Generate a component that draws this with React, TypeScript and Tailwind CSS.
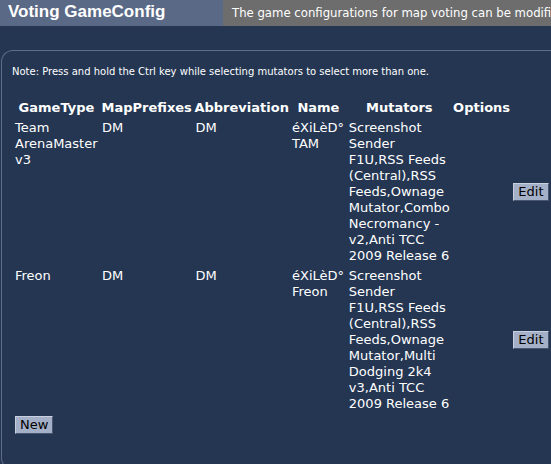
const rows = [
  {
    type: ["Team", "ArenaMaster", "v3"],
    prefix: "DM",
    abbr: "DM",
    name: ["éXiLèD°", "TAM"],
    mutators: [
      "Screenshot",
      "Sender",
      "F1U,RSS Feeds",
      "(Central),RSS",
      "Feeds,Ownage",
      "Mutator,Combo",
      "Necromancy -",
      "v2,Anti TCC",
      "2009 Release 6",
    ],
  },
  {
    type: ["Freon"],
    prefix: "DM",
    abbr: "DM",
    name: ["éXiLèD°", "Freon"],
    mutators: [
      "Screenshot",
      "Sender",
      "F1U,RSS Feeds",
      "(Central),RSS",
      "Feeds,Ownage",
      "Mutator,Multi",
      "Dodging 2k4",
      "v3,Anti TCC",
      "2009 Release 6",
    ],
  },
];

function Lines({ items }: { items: string[] }) {
  return (
    <>
      {items.map((t, i) => (
        <div key={i} className="whitespace-nowrap">
          {t}
        </div>
      ))}
    </>
  );
}

function Button({ label }: { label: string }) {
  return (
    <button className="block h-[18px] bg-[#a4b0c8] text-black text-[13px] leading-[14px] px-[4px] border border-t-[#c8d0e0] border-l-[#c8d0e0] border-b-[#4a5670] border-r-[#4a5670]">
      {label}
    </button>
  );
}

export default function App() {
  return (
    <div className="w-[551px] h-[464px] overflow-hidden bg-[#243652] text-white font-['DejaVu_Sans',sans-serif]">
      <div className="flex h-[26px]">
        <div className="w-[223px] bg-[#5a6985] pl-[8px] text-[17px] font-bold leading-[23px] font-['Liberation_Sans',sans-serif]">
          Voting GameConfig
        </div>
        <div className="flex-1 min-w-0 bg-[#6d6d6d] pl-[9px] pt-[1px] text-[11.7px] leading-[24px] whitespace-nowrap overflow-hidden">
          The game configurations for map voting can be modified here.
        </div>
      </div>

      <div className="mt-[24px] ml-[1px] h-[420px] border-l border-t border-b border-[#5e6d89] rounded-tl-[12px] rounded-bl-[12px] pt-[15px]">
        <p className="pl-[10px] text-[10px] leading-[12px] whitespace-nowrap">
          Note: Press and hold the Ctrl key while selecting mutators to select more than one.
        </p>

        <table className="mt-[20px] ml-[11px] table-fixed border-collapse text-[13px] leading-[16px]">
          <colgroup>
            <col className="w-[87px]" />
            <col className="w-[94px]" />
            <col className="w-[97px]" />
            <col className="w-[57px]" />
            <col className="w-[105px]" />
            <col className="w-[60px]" />
            <col className="w-[40px]" />
          </colgroup>
          <thead>
            <tr>
              {["GameType", "MapPrefixes", "Abbreviation", "Name", "Mutators", "Options"].map((h) => (
                <th key={h} className="py-[2px] font-bold text-center whitespace-nowrap">
                  {h}
                </th>
              ))}
              <th />
            </tr>
          </thead>
          <tbody>
            {rows.map((r, i) => (
              <tr key={i} className="align-top">
                <td className="py-[2px] px-[2px]">
                  <Lines items={r.type} />
                </td>
                <td className="py-[2px] px-[2px]">{r.prefix}</td>
                <td className="py-[2px] px-[2px]">{r.abbr}</td>
                <td className="py-[2px] px-[2px]">
                  <Lines items={r.name} />
                </td>
                <td className="py-[2px] px-[2px]">
                  <Lines items={r.mutators} />
                </td>
                <td />
                <td className="align-middle py-[2px] pl-[2px]">
                  <Button label="Edit" />
                </td>
              </tr>
            ))}
          </tbody>
        </table>

        <div className="mt-[2px] ml-[13px]">
          <Button label="New" />
        </div>
      </div>
    </div>
  );
}
